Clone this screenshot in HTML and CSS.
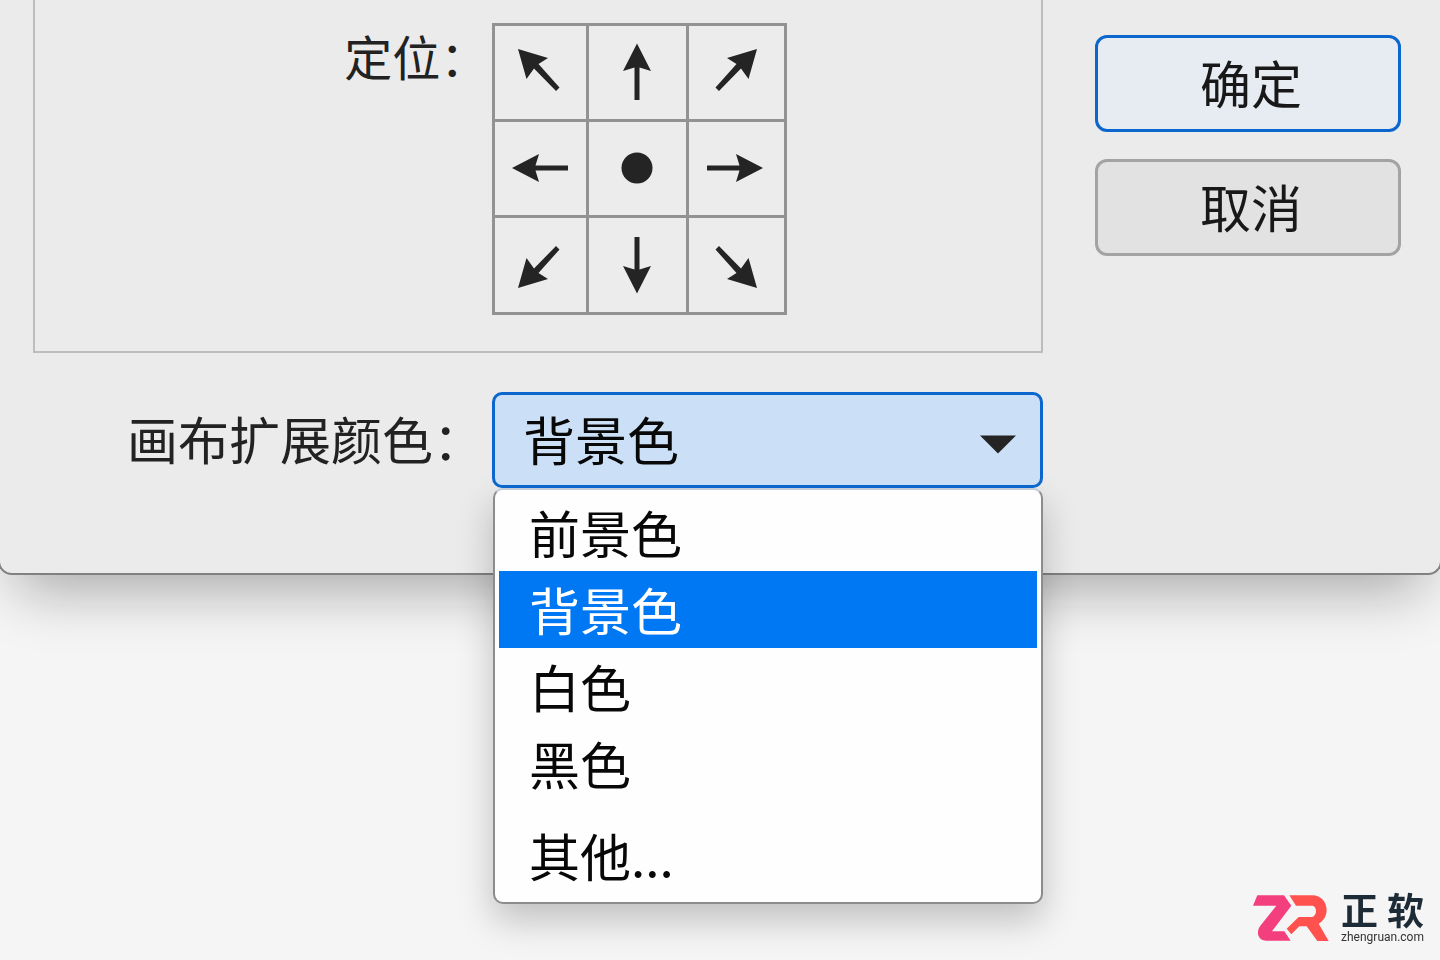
FILE: index.html
```html
<!DOCTYPE html>
<html lang="zh-CN">
<head>
    <meta charset="UTF-8">
    <meta name="viewport" content="width=device-width, initial-scale=1.0">
    <title>画布大小</title>
    <link rel="stylesheet" href="styles.css">
</head>
<body>
    <form class="dialog">
        <div class="settings">
            <div class="group" role="group" aria-labelledby="anchorLabel">
                <span class="label label-anchor" id="anchorLabel">定位：</span>
                <div class="anchor-grid">
                    <button type="button" class="anchor" aria-label="左上"><svg viewBox="0 1 64 64"><path d="M9 9L39 18L29.500 24L50.500 47.500L47 51L25 28.500L17.500 39Z"/></svg></button>
                    <button type="button" class="anchor" aria-label="上"><svg viewBox="1 1 64 64"><path d="M32 3.500L46 31L34.500 27.500V60H29.500V27.500L18 31Z"/></svg></button>
                    <button type="button" class="anchor" aria-label="右上"><svg viewBox="2 1 64 64"><path d="M54 9L24 18L33.500 24L12.500 47.500L16 51L38 28.500L45.500 39Z"/></svg></button>
                    <button type="button" class="anchor" aria-label="左"><svg viewBox="1 1 64 64"><path d="M4 32L31 18L27.500 29.500H60V34.500H27.500L31 46Z"/></svg></button>
                    <button type="button" class="anchor" aria-label="中"><svg viewBox="1 1 64 64"><circle cx="32" cy="32" r="15.500"/></svg></button>
                    <button type="button" class="anchor" aria-label="右"><svg viewBox="2 1 64 64"><path d="M60 32L33 18L36.500 29.500H4V34.500H36.500L33 46Z"/></svg></button>
                    <button type="button" class="anchor" aria-label="左下"><svg viewBox="0 0 64 64"><path d="M9 55L39 46L29.500 40L50.500 16.500L47 13L25 35.500L17.500 25Z"/></svg></button>
                    <button type="button" class="anchor" aria-label="下"><svg viewBox="1 0 64 64"><path d="M32 60.500L46 33L34.500 36.500V4H29.500V36.500L18 33Z"/></svg></button>
                    <button type="button" class="anchor" aria-label="右下"><svg viewBox="2 0 64 64"><path d="M54 55L24 46L33.500 40L12.500 16.500L16 13L38 35.500L45.500 25Z"/></svg></button>
                </div>
            </div>

            <div class="row">
                <label class="label" for="extendColor">画布扩展颜色：</label>
                <div class="dropdown">
                    <select class="select" id="extendColor">
                        <option>前景色</option>
                        <option selected>背景色</option>
                        <option>白色</option>
                        <option>黑色</option>
                        <option>其他...</option>
                    </select>
                    <svg class="caret" viewBox="0 0 36 18"><path d="M0 0H36L18 18Z"/></svg>
                    <ul class="menu" role="listbox" aria-labelledby="extendColor">
                        <li class="menu-item" role="option">前景色</li>
                        <li class="menu-item active" role="option" aria-selected="true">背景色</li>
                        <li class="menu-item" role="option">白色</li>
                        <li class="menu-item" role="option">黑色</li>
                        <li class="menu-item other" role="option">其他...</li>
                    </ul>
                </div>
            </div>
        </div>

        <div class="actions">
            <button type="submit" class="btn btn-primary">确定</button>
            <button type="button" class="btn">取消</button>
        </div>
    </form>

    <div class="brand">
        <svg class="brand-logo" viewBox="35 42 228 138">
            <path fill="#f43f7f" d="M48 43H128L150 74L92 151H129L148 179H74C50 179 43 152 57 134L105 74H35Z"/>
            <path fill="#ff514d" d="M144 43H212C262 43 270 108 232 128L262 180H228L196 136H174L150 160L136 143L172 108H212C228 106 228 74 212 74H164Z"/>
        </svg>
        <div class="brand-text">
            <div class="brand-name"><span>正</span><span>软</span></div>
            <div class="brand-url">zhengruan.com</div>
        </div>
    </div>
</body>
</html>
```
FILE: styles.css
```css
* {
    box-sizing: border-box;
}
body {
    margin: 0;
    min-height: 100vh;
    overflow: hidden;
    background: #f5f5f5;
    color: #222;
    font-family: "Noto Sans CJK SC", sans-serif;
    font-size: 51px;
}
button,
select {
    font: inherit;
    color: inherit;
}
.dialog {
    display: flex;
    gap: 52px;
    margin: 0 -2px;
    padding: 0 39px 85px 33px;
    background: #ebebeb;
    border: 2px solid #7f807f;
    border-top: 0;
    border-radius: 0 0 14px 14px;
    box-shadow: 0 32px 56px -18px rgba(0, 0, 0, 0.32);
}
.settings {
    flex: 1;
}
.group,
.row {
    display: grid;
    grid-template-columns: 5fr 6fr;
}
.group {
    padding: 23px 0 36px;
    border: 2px solid #bcbdbd;
    border-top: 0;
}
.row {
    align-items: center;
    margin-top: 39px;
}
.label {
    padding: 0 8px 4px 0;
    text-align: right;
    line-height: 64px;
    white-space: nowrap;
}
.label-anchor {
    padding-right: 4px;
    font-size: 48px;
}
.anchor-grid {
    display: grid;
    grid-template-columns: 91px 97px 95px;
    grid-template-rows: 93px 93px 94px;
    gap: 3px;
    justify-self: start;
    padding: 3px;
    background: #929292;
}
.anchor {
    display: flex;
    align-items: center;
    justify-content: center;
    padding: 0;
    border: 0;
    background: #ececec;
}
.anchor svg {
    width: 64px;
    height: 64px;
    fill: #242424;
}
.dropdown {
    position: relative;
}
.select {
    position: relative;
    z-index: 1;
    display: block;
    width: 100%;
    height: 96px;
    padding: 0 64px 4px 28px;
    appearance: none;
    background: #cbe0f7;
    border: 3px solid #0b66cd;
    border-radius: 10px;
    color: #080808;
    font-size: 52px;
}
.caret {
    position: absolute;
    z-index: 2;
    top: 43px;
    right: 27px;
    width: 36px;
    height: 19px;
    fill: #242424;
    pointer-events: none;
}
.menu {
    position: absolute;
    top: 100%;
    left: 1px;
    right: 0;
    margin: 0;
    padding: 4px 4px 8px;
    list-style: none;
    background: #fefefe;
    border: 2px solid #8c8c8c;
    border-top-color: #c4cdd8;
    border-radius: 10px;
    box-shadow: 0 16px 36px rgba(0, 0, 0, 0.22);
    color: #080808;
}
.menu-item {
    height: 77px;
    padding-left: 30px;
    line-height: 76px;
}
.menu-item.active {
    background: #0078f4;
    color: #fff;
}
.menu-item.other {
    margin-top: 15px;
}
.actions {
    display: flex;
    flex-direction: column;
    gap: 27px;
    width: 306px;
    padding-top: 35px;
}
.btn {
    height: 97px;
    padding: 0 0 4px 6px;
    background: #e2e2e2;
    border: 3px solid #a3a3a3;
    border-radius: 12px;
    color: #181818;
}
.btn-primary {
    background: #e7ecf2;
    border-color: #0b66cd;
}
.brand {
    position: fixed;
    right: 16px;
    bottom: 16px;
    display: flex;
    align-items: center;
    gap: 12px;
}
.brand-logo {
    width: 76px;
    height: 46px;
}
.brand-name {
    display: flex;
    justify-content: space-between;
    margin-bottom: 3px;
    font-size: 37px;
    font-weight: 700;
    line-height: 36px;
    color: #1c2b36;
}
.brand-url {
    font-family: Roboto, sans-serif;
    font-size: 12px;
    line-height: 14px;
    color: #333;
}
```
